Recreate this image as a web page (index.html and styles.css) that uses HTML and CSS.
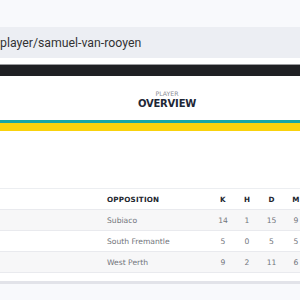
FILE: index.html
```html
<!DOCTYPE html>
<html>
<head>
<meta charset="utf-8">
<link rel="stylesheet" href="styles.css">
</head>
<body>
<div class="top"></div>
<div class="urlbar"><span class="url">player/samuel-van-rooyen</span></div>
<div class="card">
  <div class="dark"></div>
  <div class="title">
    <div class="kicker">PLAYER</div>
    <div class="heading">OVERVIEW</div>
  </div>
  <div class="stripe-teal"></div>
  <div class="stripe-yellow"></div>
  <div class="spacer"></div>
  <div class="table">
    <div class="row head">
      <div></div><div class="opp">OPPOSITION</div><div class="num">K</div><div class="num">H</div><div class="num">D</div><div class="num">M</div>
    </div>
    <div class="row alt">
      <div></div><div class="opp">Subiaco</div><div class="num">14</div><div class="num">1</div><div class="num">15</div><div class="num">9</div>
    </div>
    <div class="row">
      <div></div><div class="opp">South Fremantle</div><div class="num">5</div><div class="num">0</div><div class="num">5</div><div class="num">5</div>
    </div>
    <div class="row alt">
      <div></div><div class="opp">West Perth</div><div class="num">9</div><div class="num">2</div><div class="num">11</div><div class="num">6</div>
    </div>
  </div>
  <div class="tail"></div>
</div>
<div class="shadow"></div>
</body>
</html>
```
FILE: styles.css
```css
html, body {
  margin: 0;
  padding: 0;
  width: 300px;
  height: 300px;
  overflow: hidden;
  background: #f8f9fc;
}
.top {
  height: 27px;
}
.urlbar {
  height: 31px;
  background: #eceef3;
  display: flex;
  align-items: center;
}
.url {
  font-family: Roboto, "Liberation Sans", sans-serif;
  font-size: 12.3px;
  color: #333;
  margin-top: 1px;
}
.card {
  background: #fff;
  padding-top: 6px;
  overflow: hidden;
}
.dark {
  height: 11px;
  background: #1f2023;
  border-top: 1px solid #9a9b9e;
}
.title {
  height: 44px;
  display: flex;
  flex-direction: column;
  align-items: center;
  padding-left: 34px;
  font-family: "DejaVu Sans", sans-serif;
}
.kicker {
  margin-top: 14px;
  font-size: 6.2px;
  color: #8a8d93;
  line-height: 8px;
}
.heading {
  font-size: 10px;
  font-weight: bold;
  color: #1e2736;
  line-height: 12px;
  letter-spacing: -0.2px;
}
.stripe-teal {
  height: 3px;
  background: #17a6a6;
}
.stripe-yellow {
  height: 8px;
  background: #f9d20d;
}
.spacer {
  height: 57px;
}
.table {
  font-family: "DejaVu Sans", sans-serif;
  font-size: 7.6px;
  color: #72757b;
  overflow: hidden;
}
.row {
  display: grid;
  grid-template-columns: 107px 104px 24px 24px 25px 24px;
  height: 20px;
  align-items: center;
  border-bottom: 1px solid #e9eaee;
}
.row.head {
  border-top: 1px solid #eceef1;
  font-weight: bold;
  color: #22262e;
  font-size: 7.2px;
  letter-spacing: 0.2px;
}
.row.alt {
  background: #f7f7f8;
}
.num {
  text-align: center;
}
.tail {
  height: 8px;
}
.shadow {
  height: 3px;
  background: #e2e3e9;
}
```
